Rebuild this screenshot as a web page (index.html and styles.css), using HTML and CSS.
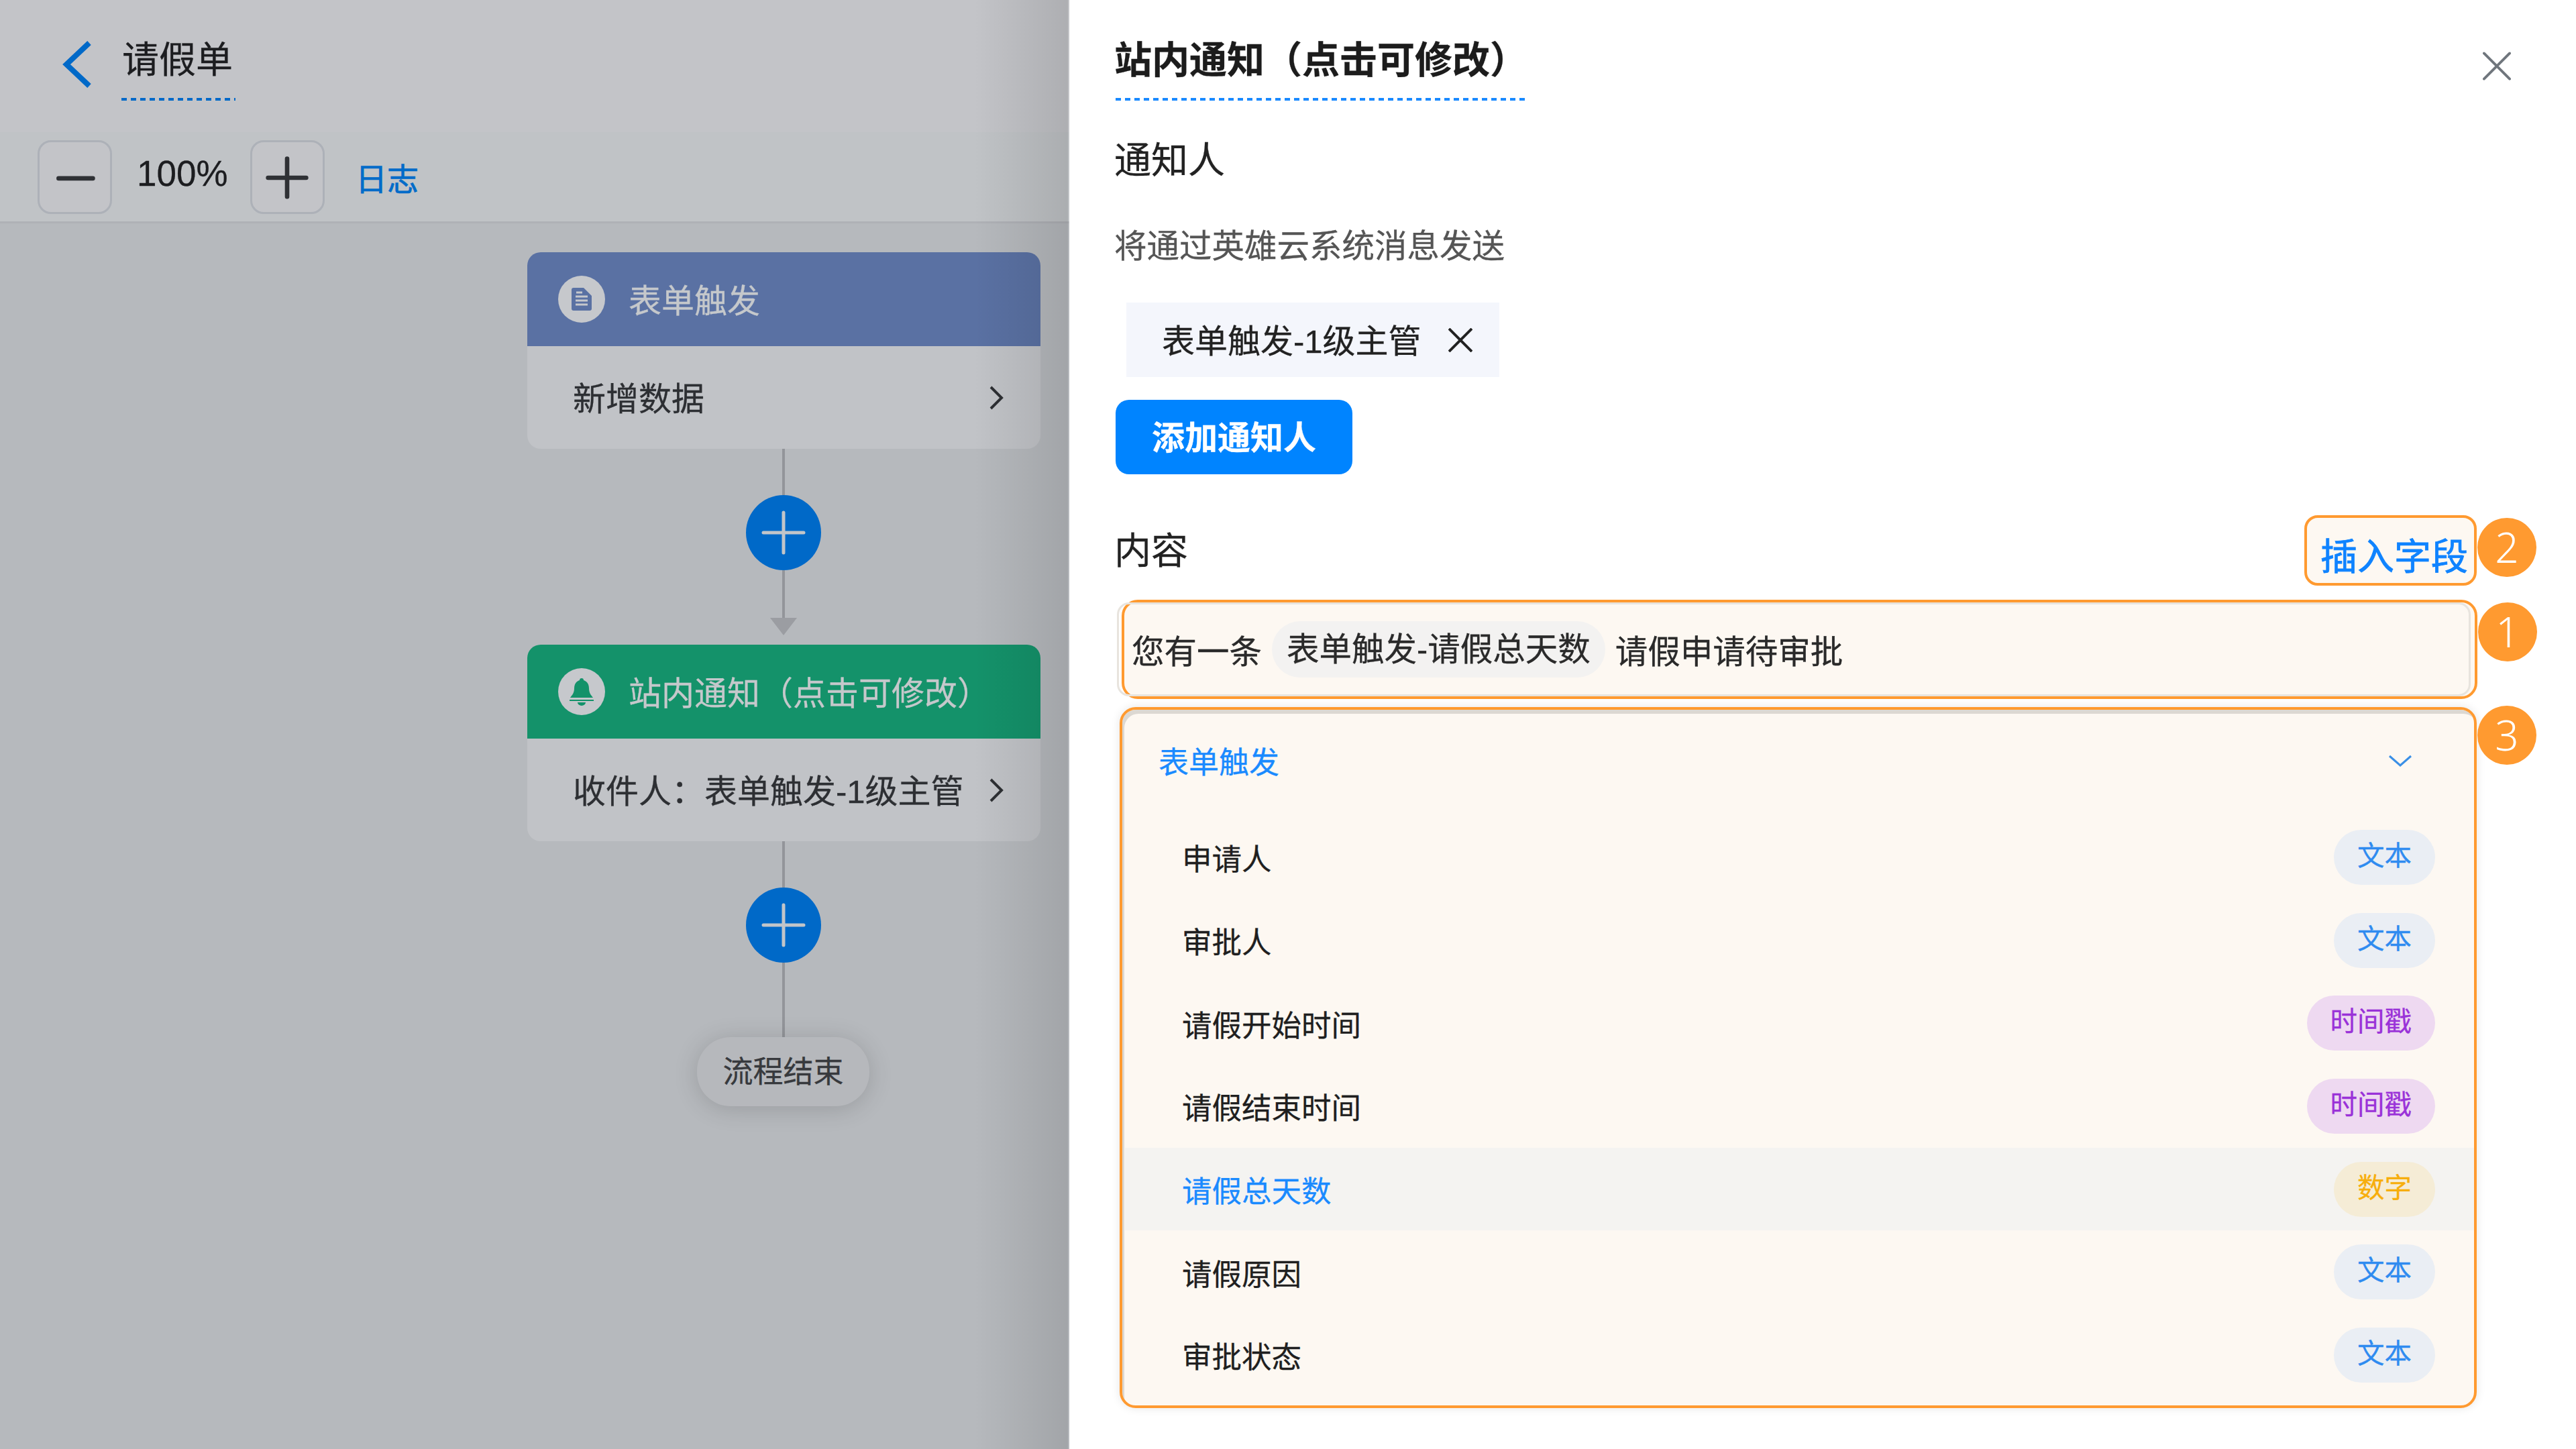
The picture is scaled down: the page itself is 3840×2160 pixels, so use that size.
FILE: index.html
```html
<!DOCTYPE html>
<html lang="zh-CN">
<head>
  <meta charset="UTF-8">
  <title>请假单</title>
  <link rel="stylesheet" href="styles.css">
</head>
<body>
  <div class="app">
    <div class="canvas">
      <div class="top-bar">
        <svg class="back-icon" viewBox="0 0 46 72"><polyline points="40,4 6,36 40,68" /></svg>
        <div class="form-name">请假单</div>
      </div>
      <div class="toolbar">
        <div class="zoom-btn">
          <svg viewBox="0 0 110 110"><path d="M30 57H84" /></svg>
        </div>
        <span class="zoom-value">100%</span>
        <div class="zoom-btn">
          <svg viewBox="0 0 110 110"><path d="M25 56H85M55 26V86" /></svg>
        </div>
        <span class="log-link">日志</span>
      </div>
      <div class="flow">
        <div class="node">
          <div class="node-head head-blue">
            <svg class="node-icon" viewBox="0 0 70 70">
              <circle cx="35" cy="35" r="35" fill="#c6c8cc" />
              <path d="M20 21a3 3 0 0 1 3-3h15l12 12v19a3 3 0 0 1-3 3H23a3 3 0 0 1-3-3z" fill="#5a71a3" />
              <path d="M26 31h18M26 37h18M26 43h18M27 25h9" stroke="#c6c8cc" stroke-width="3" />
            </svg>
            <span>表单触发</span>
          </div>
          <div class="node-body">
            <span>新增数据</span>
            <svg class="node-arrow" viewBox="0 0 24 36"><polyline points="4,2 20,18 4,34" /></svg>
          </div>
        </div>
        <div class="line h-69"></div>
        <div class="add-btn">
          <svg viewBox="0 0 112 112"><path d="M26 56H86M56 26V86" /></svg>
        </div>
        <div class="line h-72"></div>
        <div class="arrow-head"></div>
        <div class="node node-second">
          <div class="node-head head-green">
            <svg class="node-icon" viewBox="0 0 70 70">
              <circle cx="35" cy="35" r="35" fill="#c6c8cc" />
              <path d="M35 15c2 0 3 1 3 3 6 2 8 7 8 12 0 7 3 10 6 14H18c3-4 6-7 6-14 0-5 2-10 8-12 0-2 1-3 3-3z" fill="#14926a" />
              <path d="M17 47h36v2H17zM29 51h12a6 5 0 0 1-12 0z" fill="#14926a" />
            </svg>
            <span>站内通知（点击可修改）</span>
          </div>
          <div class="node-body">
            <span>收件人：表单触发-1级主管</span>
            <svg class="node-arrow" viewBox="0 0 24 36"><polyline points="4,2 20,18 4,34" /></svg>
          </div>
        </div>
        <div class="line h-69"></div>
        <div class="add-btn">
          <svg viewBox="0 0 112 112"><path d="M26 56H86M56 26V86" /></svg>
        </div>
        <div class="line h-111"></div>
        <div class="flow-end">流程结束</div>
      </div>
    </div>

    <div class="drawer">
      <svg class="close-icon" viewBox="0 0 44 44"><path d="M2 2L42 42M42 2L2 42" /></svg>
      <div class="drawer-title">站内通知（点击可修改）</div>

      <div class="label label-notify">通知人</div>
      <div class="desc">将通过英雄云系统消息发送</div>
      <div class="person-tag">
        <span>表单触发-1级主管</span>
        <svg viewBox="0 0 36 36"><path d="M1 1L35 35M35 1L1 35" /></svg>
      </div>
      <div class="add-person">添加通知人</div>

      <div class="content-head">
        <div class="label">内容</div>
        <div class="insert-btn">插入字段<span class="badge badge-2">2</span></div>
      </div>

      <div class="msg-box">
        <div class="msg-inner">
          <span>您有一条</span>
          <span class="msg-chip">表单触发-请假总天数</span>
          <span>请假申请待审批</span>
        </div>
        <span class="badge badge-1">1</span>
      </div>

      <div class="field-box">
        <span class="badge badge-3">3</span>
        <div class="field-head">
          <span>表单触发</span>
          <svg viewBox="0 0 36 18"><polyline points="2,2 18,16 34,2" /></svg>
        </div>
        <div class="field-row"><span>申请人</span><span class="type type-text">文本</span></div>
        <div class="field-row"><span>审批人</span><span class="type type-text">文本</span></div>
        <div class="field-row"><span>请假开始时间</span><span class="type type-time">时间戳</span></div>
        <div class="field-row"><span>请假结束时间</span><span class="type type-time">时间戳</span></div>
        <div class="field-row active"><span>请假总天数</span><span class="type type-num">数字</span></div>
        <div class="field-row"><span>请假原因</span><span class="type type-text">文本</span></div>
        <div class="field-row"><span>审批状态</span><span class="type type-text">文本</span></div>
      </div>
    </div>
  </div>
</body>
</html>
```

FILE: styles.css
```css
* {
  box-sizing: border-box;
}

body {
  margin: 0;
  font-family: "Liberation Sans", "Noto Sans CJK SC", sans-serif;
  color: #222;
  -webkit-text-stroke: 0.3px;
}

.app {
  display: flex;
  width: 3840px;
  height: 2160px;
  overflow: hidden;
}

/* left side, dimmed by the drawer */
.canvas {
  position: relative;
  width: 1594px;
  background-color: #b6b9bd;
}

.canvas::after {
  content: "";
  position: absolute;
  top: 0;
  right: 2px;
  bottom: 0;
  width: 140px;
  background: linear-gradient(to right, rgba(0, 0, 0, 0), rgba(0, 0, 0, 0.11));
}

.top-bar {
  display: flex;
  height: 197px;
  padding-left: 93px;
  background-color: #c3c4c8;
}

.back-icon {
  width: 46px;
  height: 72px;
  margin-top: 60px;
  fill: none;
  stroke: #0069c8;
  stroke-width: 8;
}

.form-name {
  height: 90px;
  margin: 60px 0 0 42px;
  padding: 2px 4px 0 1px;
  font-size: 55px;
  line-height: 54px;
  color: #1c1d20;
  background: repeating-linear-gradient(90deg, #0069c8 0 8px, transparent 8px 14px) bottom / 100% 4px no-repeat;
}

.toolbar {
  display: flex;
  align-items: center;
  height: 136px;
  padding-left: 56px;
  background-color: #c0c3c6;
  border-bottom: 3px solid #afb1b6;
}

.zoom-btn {
  width: 111px;
  height: 110px;
  border: 3px solid #adb1b8;
  border-radius: 20px;
  background-color: #c3c4c8;
}

.zoom-btn svg {
  display: block;
  width: 104px;
  height: 104px;
  fill: none;
  stroke: #2f3135;
  stroke-width: 7;
  stroke-linecap: round;
}

.zoom-value {
  width: 206px;
  margin-bottom: 10px;
  padding-left: 37px;
  font-size: 53px;
  color: #1c1d20;
}

.log-link {
  margin-left: 46px;
  font-size: 47px;
  color: #006bc9;
  -webkit-text-stroke: 0.7px;
}

.flow {
  display: flex;
  flex-direction: column;
  align-items: center;
  width: 763px;
  margin-left: 786px;
  padding-top: 43px;
}

.node {
  align-self: flex-start;
  width: 765px;
  border-radius: 20px;
  overflow: hidden;
  background-color: #c1c3c7;
}

.node-head {
  display: flex;
  align-items: center;
  height: 140px;
  padding-left: 46px;
  font-size: 49px;
  color: #c5c8cb;
}

.head-blue {
  background-color: #5a71a3;
}

.head-green {
  background-color: #14926a;
}

.node-icon {
  width: 70px;
  height: 70px;
  margin-right: 35px;
}

.node-head span,
.node-body span {
  padding-bottom: 4px;
}

.node-body {
  display: flex;
  align-items: center;
  justify-content: space-between;
  height: 153px;
  padding: 0 54px 0 68px;
  font-size: 49px;
  color: #2d2f33;
}

.node-arrow {
  width: 24px;
  height: 36px;
  fill: none;
  stroke: #2d2f33;
  stroke-width: 4;
}

.line {
  width: 4px;
  background-color: #93959a;
}

.h-69 {
  height: 69px;
}

.h-72 {
  height: 72px;
}

.h-111 {
  height: 111px;
}

.arrow-head {
  width: 0;
  height: 0;
  border-left: 20px solid transparent;
  border-right: 20px solid transparent;
  border-top: 26px solid #9b9da2;
  margin-top: -1px;
}

.node-second {
  margin-top: 14px;
}

.add-btn {
  width: 112px;
  height: 112px;
  border-radius: 50%;
  background-color: #0069c8;
}

.add-btn svg {
  display: block;
  width: 112px;
  height: 112px;
  fill: none;
  stroke: #c2c5c9;
  stroke-width: 5;
  stroke-linecap: round;
}

.flow-end {
  width: 257px;
  height: 103px;
  border-radius: 50px;
  font-size: 45px;
  line-height: 106px;
  text-align: center;
  color: #37393d;
  background-color: #b6b8bc;
  box-shadow: 0 4px 36px rgba(0, 0, 0, 0.16);
}

/* right drawer */
.drawer {
  position: relative;
  flex: 1;
  padding: 61px 148px 0 69px;
  background-color: #fff;
}

.close-icon {
  position: absolute;
  top: 77px;
  right: 97px;
  width: 42px;
  height: 43px;
  fill: none;
  stroke: #6f757c;
  stroke-width: 4;
  stroke-linecap: round;
}

.drawer-title {
  width: 612px;
  height: 89px;
  padding-top: 2px;
  font-size: 56px;
  font-weight: 700;
  line-height: 54px;
  text-indent: -2px;
  white-space: nowrap;
  color: #1c1c1c;
  background: repeating-linear-gradient(90deg, #1a8aff 0 8px, transparent 8px 14px) bottom / 100% 4px no-repeat;
}

.label {
  font-size: 55px;
  line-height: 54px;
  text-indent: -2px;
  color: #222;
}

.label-notify {
  margin-top: 62px;
}

.desc {
  margin-top: 77px;
  font-size: 48.5px;
  line-height: 48px;
  text-indent: -2px;
  color: #555;
}

.person-tag {
  display: flex;
  align-items: center;
  justify-content: space-between;
  width: 556px;
  height: 111px;
  margin: 60px 0 0 16px;
  padding: 0 40px 0 53px;
  font-size: 49px;
  color: #222;
  background-color: #f4f6fc;
}

.person-tag span {
  padding-bottom: 4px;
}

.person-tag svg {
  width: 36px;
  height: 36px;
  fill: none;
  stroke: #222;
  stroke-width: 4;
}

.add-person {
  width: 353px;
  height: 111px;
  margin-top: 34px;
  border-radius: 20px;
  font-size: 49px;
  font-weight: 700;
  line-height: 114px;
  text-align: center;
  color: #fff;
  background-color: #0084ff;
}

.content-head {
  display: flex;
  align-items: center;
  justify-content: space-between;
  margin-top: 61px;
}

.insert-btn {
  position: relative;
  width: 257px;
  height: 105px;
  padding: 28px 0 0 20px;
  border: 4px solid #ff9a30;
  border-radius: 20px;
  font-size: 55px;
  line-height: 60px;
  color: #0f83ff;
  background-color: #fdf8f2;
  -webkit-text-stroke: 0.8px;
}

.msg-box {
  position: relative;
  height: 148px;
  margin: 21px -1px 0 9px;
  border: 4px solid #ff9a30;
  border-radius: 24px;
  background-color: #fdf8f2;
}

.msg-inner {
  display: flex;
  align-items: center;
  gap: 15px;
  height: 100%;
  margin: 0 6px 0 -11px;
  padding-left: 19px;
  border: 3px solid #e8e4de;
  border-radius: 18px;
  font-size: 48.5px;
  color: #2a2a2a;
}

.msg-chip {
  height: 84px;
  padding: 0 22px;
  border-radius: 42px;
  line-height: 84px;
  background-color: #f3f2f1;
}

.badge {
  position: absolute;
  left: 100%;
  width: 88px;
  height: 88px;
  margin-left: 5px;
  border-radius: 50%;
  font-family: "Noto Sans", sans-serif;
  font-size: 62px;
  font-weight: 300;
  line-height: 86px;
  text-align: center;
  color: #fff;
  background-color: #ff9a30;
  -webkit-text-stroke: 0;
}

.badge-2 {
  top: 0;
}

.badge-1 {
  top: 0;
}

.badge-3 {
  top: -6px;
}

.field-box {
  position: relative;
  height: 1045px;
  margin: 12px 0 0 6px;
  padding-top: 7px;
  border: 4px solid #ff9a30;
  border-radius: 24px;
  background-color: #fdf8f2;
  box-shadow: 0 0 14px rgba(0, 0, 0, 0.1), inset 4px 7px 0 -1px #dcd8d2;
}

.field-head {
  display: flex;
  align-items: center;
  justify-content: space-between;
  height: 151px;
  padding: 0 92px 14px 54px;
  font-size: 45px;
  color: #1a8aff;
}

.field-head svg {
  width: 36px;
  height: 18px;
  fill: none;
  stroke: #3a8fe6;
  stroke-width: 3;
}

.field-row {
  display: flex;
  align-items: center;
  justify-content: space-between;
  height: 123.7px;
  margin-left: 4px;
  padding: 0 58px 0 85px;
  font-size: 44.5px;
  color: #1f1f1f;
}

.field-row.active {
  color: #1a8aff;
  background-color: #f4f3f1;
}

.type {
  height: 82px;
  padding: 0 35px;
  border-radius: 41px;
  font-size: 40.5px;
  line-height: 78px;
}

.type-text {
  color: #2f8bf0;
  background-color: #eaeef4;
}

.type-time {
  color: #9a32d8;
  background-color: #eed9f1;
}

.type-num {
  color: #f7ae0c;
  background-color: #f5ecd6;
}
```
